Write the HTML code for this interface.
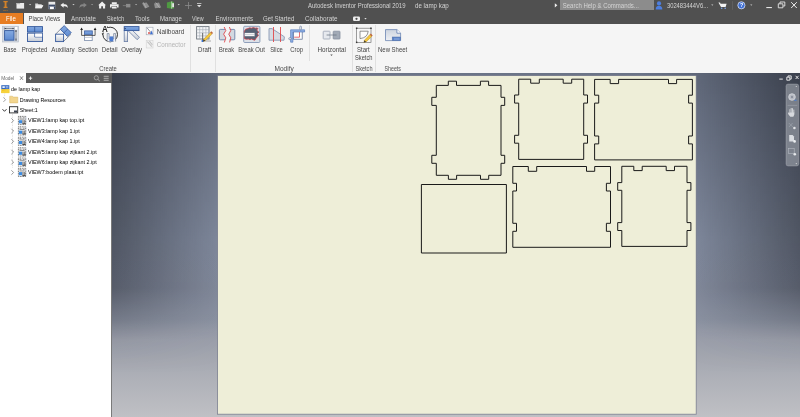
<!DOCTYPE html>
<html><head><meta charset="utf-8"><title>Autodesk Inventor Professional 2019 - de lamp kap</title>
<style>
html,body{margin:0;padding:0;}
body{width:800px;height:417px;overflow:hidden;position:relative;background:#f5f5f5;font-family:"Liberation Sans", sans-serif;}
.abs{position:absolute;}
.t{position:absolute;white-space:pre;line-height:1;}
#title{left:0;top:0;width:800px;height:24px;background:#505050;}
#filetab{left:0;top:13px;width:22.5px;height:11px;background:#e77d22;}
#pvtab{left:24px;top:13px;width:41px;height:11px;background:#f5f5f5;}
#ribbon{left:0;top:24px;width:800px;height:49px;background:#f5f5f5;}
.sep{position:absolute;width:1px;background:#e0e0e0;}
#browser{left:0;top:73px;width:112px;height:344px;background:#fff;}
#canvas{left:112px;top:73px;width:688px;height:344px;overflow:hidden;
 background:linear-gradient(180deg,#6b7487 0px,#8c96ab 167px,#8d95a8 215px,#9198a8 247px,#989dab 257px,#9da1ad 267px,#a6a9b2 287px,#bbbcc1 334px,#c0c1c5 344px);}
#vig{left:0;top:0;width:100%;height:100%;
 background:linear-gradient(90deg,rgba(10,12,18,.5) 0px,rgba(10,12,18,.12) 106px,rgba(10,12,18,0) 160px,rgba(10,12,18,0) 530px,rgba(10,12,18,.12) 584px,rgba(10,12,18,.5) 688px);
 -webkit-mask-image:linear-gradient(180deg,#000 0px,rgba(0,0,0,.92) 167px,rgba(0,0,0,.82) 215px,rgba(0,0,0,.42) 247px,rgba(0,0,0,.13) 267px,transparent 300px);mask-image:linear-gradient(180deg,#000 0px,rgba(0,0,0,.92) 167px,rgba(0,0,0,.82) 215px,rgba(0,0,0,.42) 247px,rgba(0,0,0,.13) 267px,transparent 300px);}
#sheet{left:217.5px;top:76px;width:478px;height:337.5px;background:#eeeed8;box-shadow:0 0 1.6px 0.4px rgba(40,48,86,.95), 1px 1px 2px rgba(30,34,60,.5);}
</style></head><body>
<div id="title" class="abs"></div>
<div class="abs" style="left:560px;top:0;width:93.5px;height:10px;background:#8c8c8c;"></div>
<div id="filetab" class="abs"></div>
<div id="pvtab" class="abs"></div>
<div id="ribbon" class="abs">
  <div class="sep" style="left:190px;top:1px;height:47px;"></div>
  <div class="sep" style="left:215px;top:1px;height:47px;"></div>
  <div class="sep" style="left:309px;top:1px;height:36px;"></div>
  <div class="sep" style="left:352px;top:1px;height:47px;"></div>
  <div class="sep" style="left:375px;top:1px;height:47px;"></div>
</div>
<div id="canvas" class="abs"><div id="vig" class="abs"></div></div>
<div id="browser" class="abs">
  <div class="abs" style="left:111px;top:0;width:1px;height:344px;background:#7a7a7a;"></div>
  <div class="abs" style="left:26px;top:0;width:86px;height:10px;background:#5a5a5a;"></div>
</div>
<svg class="abs" style="left:0;top:0;" width="800" height="417" viewBox="0 0 800 417" fill="none" stroke="#1a1a1a" stroke-width="1">
<rect x="217.5" y="75.6" width="478.7" height="338.6" fill="#eeeed8" stroke="#676a82" stroke-opacity=".8" stroke-width=".8"/>
<path d="M436.3 85.4H448.3V81.2H456.5V85.4H480.4V81.2H488.6V85.4H501V97.3H504.7V105.4H501V155.3H504.7V163.3H501V175.3H488.7V179.3H480.5V175.3H456.6V179.3H448.4V175.3H436.3V163.3H431.8V155.3H436.3V105.4H431.8V97.3H436.3Z"/>
<path d="M518.7 79.2H530.7V83.2H539.3V79.2H563.2V83.2H571.7V79.2H583.7V95H587.5V103.1H583.7V135.3H587.5V143.2H583.7V159.4H518.7V143.2H514.6V135.3H518.7V103.1H514.6V95H518.7Z"/>
<path d="M594.6 79.4H610.2V83.6H618.6V79.4H668.5V83.6H676.6V79.4H692.4V95.2H688.6V103.1H692.4V136H688.6V143.9H692.4V159.9H594.6V143.9H598.7V136H594.6V103.1H598.7V95.2H594.6Z"/>
<path d="M421.4 184.5H506.4V253H421.4Z"/>
<path d="M512.8 166.5H528.3V171.3H536.7V166.5H586.5V171.3H594.7V166.5H610.5V183.3H606.4V191H610.5V223.3H606.4V231.3H610.5V247.3H512.8V231.3H516.5V223.3H512.8V191H516.5V183.3H512.8Z"/>
<path d="M621.8 166.3H633.8V170.6H642.2V166.3H666.2V170.6H674.5V166.3H687V182.6H690.9V190.3H687V222.6H690.9V230.5H687V246.4H621.8V230.5H617.7V222.6H621.8V190.3H617.7V182.6H621.8Z"/>
</svg>

<svg class="abs" style="left:0;top:0;will-change:transform;" width="800" height="417" viewBox="0 0 800 417" font-family="Liberation Sans, sans-serif">
<defs>
<linearGradient id="gb" x1="0" y1="0" x2="0" y2="1"><stop offset="0" stop-color="#86abe2"/><stop offset="1" stop-color="#5d8ad0"/></linearGradient>
<linearGradient id="gg" x1="0" y1="0" x2="0" y2="1"><stop offset="0" stop-color="#ffffff"/><stop offset="1" stop-color="#c4cad4"/></linearGradient>
<linearGradient id="gs" x1="0" y1="0" x2="0" y2="1"><stop offset="0" stop-color="#cdd4df"/><stop offset="1" stop-color="#eef0f4"/></linearGradient>
</defs>
<!-- ===== quick access toolbar ===== -->
<g id="qat">
<path d="M3.4 0.9h4.3v1.3h-1.2v4.6h1v1.3h-3.9v-1.3h1v-4.6h-1.2z" fill="#d28128"/>
<text x="3.1" y="10.6" font-size="2.4" font-weight="bold" fill="#c9791f" textLength="4.8" lengthAdjust="spacingAndGlyphs">PRO</text>
<rect x="16.5" y="3" width="7.6" height="5.6" fill="#ebebeb"/><rect x="16.5" y="3" width="3.6" height="1.2" fill="#b5b5b5"/>
<path d="M29 4h2.2l-1.1 1.3z" fill="#cfcfcf"/>
<path d="M35.2 3.4h2.6l.7.8h3.2v1h1.6l-1.6 3h-6.5z" fill="#d8d8d8"/><path d="M36.4 5.3h6.9l-1.7 2.9h-6.4z" fill="#f2f2f2"/>
<rect x="48.5" y="1.8" width="6.7" height="7.3" fill="#e9e9e9"/><rect x="48.5" y="4.6" width="6.7" height="2" fill="#3f4d69"/><rect x="50" y="6.9" width="3.6" height="2.2" fill="#fdfdfd"/><rect x="48.5" y="6.6" width="1.3" height="2.5" fill="#3f4d69"/><rect x="53.9" y="6.6" width="1.3" height="2.5" fill="#3f4d69"/>
<path d="M60.4 5.1l3.2-2.4v1.5h1.3q2.9 0 2.9 3.9q-.9-1.9-2.9-1.9h-1.3v1.5z" fill="#f0f0f0"/>
<path d="M72.4 4h2.2l-1.1 1.3z" fill="#cfcfcf"/>
<path d="M86.8 5.1l-3.2-2.4v1.5h-1.3q-2.9 0-2.9 3.9q.9-1.9 2.9-1.9h1.3v1.5z" fill="#858585"/>
<path d="M91 4h2.2l-1.1 1.3z" fill="#9a9a9a"/>
<path d="M98.2 5.2l3.9-3.6l3.9 3.6h-.9v3.4h-2.1v-2.3h-1.8v2.3h-2.1v-3.4z" fill="#f0f0f0"/>
<path d="M111.8 2.2h5v1.8h-5z M110 4.2h8.6v3.2h-1.6v-1.3h-5.4v1.3h-1.6z M112 6.6h4.6v2h-4.6z" fill="#efefef"/>
<rect x="126" y="3.9" width="4.4" height="3.5" fill="#8b8b8b"/><rect x="122.8" y="5.1" width="3.5" height="1" fill="#777"/>
<path d="M135 4h2.2l-1.1 1.3z" fill="#b0b0b0"/>
<path d="M142 3.2l4.6-.8l2.8 4.3l-4.3 1.7z" fill="#8e8e8e"/><path d="M143.2 2.2l3 5.8" stroke="#b5b5b5" stroke-width=".7"/>
<path d="M154 3.4l5-.8l2.2 5l-6.2.6z" fill="#909090"/><path d="M155.6 2.4l4 5.4" stroke="#bdbdbd" stroke-width=".7"/>
<path d="M166.9 2.6l4.8-1.3l2.3.9v6.2l-2.3.4l-4.8-.9z" fill="#4f9a42"/><path d="M171.7 1.4v7.3" stroke="#d9ead4" stroke-width=".7"/><rect x="172.2" y="3.2" width="1.8" height="4" fill="#e6e6e6"/>
<path d="M177.6 4h2.2l-1.1 1.3z" fill="#cfcfcf"/>
<path d="M185 5.5h7M188.5 2v7" stroke="#8a8a8a" stroke-width=".8"/>
<path d="M197 3.2h4.4v.9h-4.4z M197 5h4.4l-2.2 2.2z" fill="#e0e0e0"/>
<!-- collaborate extra icon -->
<rect x="353" y="16.5" width="7" height="4.5" rx="1.2" fill="#ededed"/><circle cx="356.5" cy="18.8" r="1.1" fill="#4a4a4a"/>
<path d="M364.3 18h2.4l-1.2 1.5z" fill="#e0e0e0"/>
<!-- right side -->
<path d="M554.8 3.2l2.6 2.1l-2.6 2.1z" fill="#f0f0f0"/>
<circle cx="659" cy="3.4" r="2.1" fill="#4d7fe0"/><path d="M655.7 9.4q0-3.6 3.3-3.6t3.3 3.6z" fill="#4d7fe0"/>
<path d="M711.2 4.4h2.2l-1.1 1.4z" fill="#cfcfcf"/>
<path d="M718.4 2.6h1.6l.6 1.2h6l-1 3.3h-4.6z" fill="#f2f2f2"/><circle cx="721.7" cy="8.3" r=".8" fill="#7aa2e8"/><circle cx="725.2" cy="8.3" r=".8" fill="#7aa2e8"/>
<rect x="732.3" y="1.2" width=".7" height="8.6" fill="#666"/>
<circle cx="741.4" cy="5.3" r="3.6" fill="#3f6fd3" stroke="#e8eefc" stroke-width=".7"/>
<text x="739.9" y="7.3" font-size="5.4" font-weight="bold" fill="#fff">?</text>
<path d="M750.2 4.4h2.2l-1.1 1.4z" fill="#cfcfcf"/>
<rect x="766.3" y="7" width="5.6" height="1.1" fill="#e6e6e6"/>
<path d="M778.3 3.8h4.6v4h-4.6z M780 3.6v-1.6h4.8v4h-1.7" fill="none" stroke="#e6e6e6" stroke-width=".9"/>
<path d="M791.2 2.2l5.6 5.8M796.8 2.2l-5.6 5.8" stroke="#ededed" stroke-width="1"/>
</g>
<!-- ===== ribbon icons ===== -->
<g id="rib">
<!-- Base -->
<rect x="2.6" y="26.2" width="15.8" height="15.8" fill="#d5dae2" stroke="#aeb6c4" stroke-width=".6"/>
<rect x="4.6" y="30.6" width="9.4" height="9.6" fill="url(#gb)" stroke="#35599c" stroke-width=".9"/>
<path d="M4.6 28.5h9.4M16 30.6v9.600" stroke="#4a4f5a" stroke-width=".55"/><path d="M4.400 27.400v2.200M14.200 27.400v2.200M15 30.500h2M15 40.300h2" stroke="#4a4f5a" stroke-width=".5"/><path d="M4.800 28.500l1.300-.700v1.400zM13.800 28.500l-1.300-.700v1.400zM16 30.800l-.700 1.300h1.400zM16 40l-.700-1.300h1.400z" fill="#30343c"/>
<rect x="14.8" y="27" width="2.4" height="2.6" fill="#fff"/>
<!-- Projected -->
<rect x="27.5" y="26.6" width="15" height="5.5" fill="url(#gb)" stroke="#35599c" stroke-width=".9"/><path d="M34.7 26.6v5.5" stroke="#35599c" stroke-width=".9"/>
<rect x="27.5" y="33.2" width="15" height="8.3" fill="url(#gg)" stroke="#35599c" stroke-width=".9"/><path d="M34.7 33.2v3.8h7.8" fill="none" stroke="#35599c" stroke-width=".8"/>
<rect x="35.2" y="33.7" width="6.9" height="3" fill="#fbfbfb"/>
<!-- Auxiliary -->
<path d="M55.6 34.2l7-7M63.6 41.4l7.4-7.2M63.6 34.2l4-4" stroke="#3d4a60" stroke-width=".6"/>
<rect x="55.6" y="34.2" width="8" height="7.4" fill="url(#gg)" stroke="#35599c" stroke-width=".9"/>
<path d="M64.2 25.6l7 7l-3.8 3.8l-7-7z" fill="url(#gb)" stroke="#35599c" stroke-width=".8"/><path d="M67.7 29.1l-3.8 3.8" stroke="#35599c" stroke-width=".7"/>
<!-- Section -->
<rect x="84.6" y="31" width="7.6" height="9.6" fill="#fff" stroke="#7b8cab" stroke-width=".8"/><rect x="84.6" y="31" width="7.6" height="3.4" fill="url(#gb)" stroke="#4468ac" stroke-width=".8"/><path d="M84.6 37.4h7.6" stroke="#aab4c6" stroke-width=".7"/>
<path d="M81.6 29v6.400h13.500v-6.400" fill="none" stroke="#1e1e1e" stroke-width=".7"/><path d="M80.200 30l1.400-2.600l1.400 2.600zM93.700 30l1.400-2.600l1.400 2.600z" fill="#1e1e1e"/>
<!-- Detail -->
<circle cx="110.2" cy="34.5" r="7.3" fill="none" stroke="#1e1e1e" stroke-width=".9"/>
<rect x="101.400" y="25.600" width="6.800" height="7" fill="#f5f5f5"/>
<path d="M108.6 27.2l-1.6-.9v1.8zM102.9 34.9l-1.3-1.1l1.7-.6z" fill="#1e1e1e"/>
<path d="M107.200 41.600v-8h1.900v5.400h4.600v-5.400h1.900v8" fill="#eef1f6" stroke="#55657f" stroke-width=".6"/><rect x="109.500" y="36.400" width="3.800" height="5" fill="#4c7bd0"/>
<text x="102" y="32.400" font-size="8.200" font-weight="bold" fill="#222" textLength="5.800" lengthAdjust="spacingAndGlyphs">A</text>
<!-- Overlay -->
<rect x="124.2" y="30.6" width="3.4" height="11" fill="url(#gg)" stroke="#6a7ea6" stroke-width=".8"/>
<path d="M127.8 30.4l2.3-2.3l9.4 9.2l-2.4 2.4z" fill="url(#gg)" stroke="#6a7ea6" stroke-width=".8"/>
<rect x="124.2" y="26.6" width="14.8" height="4" fill="url(#gb)" stroke="#35599c" stroke-width=".9"/><path d="M124.6 27.6l1.4 1l-1.4 1z" fill="#1d2f57"/>
<!-- Nailboard / Connector -->
<rect x="146.2" y="27.2" width="6.8" height="7.6" fill="#fdfdfd" stroke="#9aa2b0" stroke-width=".6"/><path d="M147.2 28l4.6 5.6" stroke="#667" stroke-width=".7"/><path d="M151.8 30.6l1 3.6h-3z" fill="#3f70d0"/><circle cx="149" cy="33" r="1" fill="#d9534f"/>
<rect x="146.2" y="40.4" width="6.8" height="7.6" fill="#f3f3f3" stroke="#d2d2d2" stroke-width=".6"/><path d="M147.4 41.6l4.4 5M149.4 41.2l3 3.6" stroke="#c4c4c4" stroke-width="1.1"/>
<!-- Draft -->
<rect x="196.6" y="26.6" width="12.4" height="12.4" fill="#f4f5f7" stroke="#70777f" stroke-width=".9"/>
<path d="M199.7 26.6v12.4M202.8 26.6v12.4M205.9 26.6v12.4M196.6 29.7h12.4M196.6 32.8h12.4M196.6 35.9h12.4" stroke="#a3a9b3" stroke-width=".6"/>
<path d="M202.6 33v8" stroke="#555" stroke-width=".8"/><path d="M204 41h7" stroke="#999" stroke-width=".8"/><rect x="201.6" y="40" width="2" height="2" fill="#2f6fe0"/>
<path d="M203.6 39.2l6.6-6.8l1.8 1.7l-6.7 6.7l-2.3.7z" fill="#f4c63a" stroke="#a8842a" stroke-width=".4"/><path d="M210.2 32.4l1.1-1.1l1.8 1.7l-1.1 1.1z" fill="#c26a3a"/><path d="M203.6 39.2l1.7 1.6l-2.3.7z" fill="#3a3a3a"/>
<!-- Break -->
<rect x="219.4" y="29.4" width="15.4" height="10.4" rx=".8" fill="#d3d8e0" stroke="#6c83a8" stroke-width=".9"/>
<path d="M224.2 27.2l1.6 3.4l-2.2 3.6l2.2 3.6l-1.4 4.4l4.6 0l1.2-4.4l-2-3.6l2-3.6l-1.4-3.4z" fill="#f5f5f5"/>
<path d="M224.2 27l1.6 3.6l-2.2 3.6l2.2 3.6l-1.4 4.6M229.4 27l1.4 3.6l-2 3.6l2 3.600l-1.200 4.600" fill="none" stroke="#e0474c" stroke-width=".9"/>
<!-- Break Out -->
<rect x="243.700" y="26.300" width="16.200" height="16.200" rx="1" fill="#dde1e8" stroke="#8496b4" stroke-width=".9"/>
<path d="M244.300 31.200q1-2.800 3.600-2.600q1.600-1.400 3.600-.4q1.800-1.200 3.800 0q1.400-.800 2.800.400l-1.400 1.400l2.200 2.200l-1.600 1.400l1.200 2q-1.200 1-2.400 2.600l-1.200 2q-2.200-.400-3.400-1.200q-1.600 1.200-3.200 0q-2.200.800-4-.400z" fill="#566174" stroke="#d8363c" stroke-width=".7"/>
<rect x="244.300" y="32.800" width="10.600" height="3.600" fill="#fbfbfb" stroke="#566174" stroke-width=".5"/><path d="M244.300 34.600h10.600" stroke="#9aa3b2" stroke-width=".5"/>
<!-- Slice -->
<path d="M269 28.600h3l12.400 8.200l-.4 3.400h-15z" fill="#d6dbe3" stroke="#8a9ab5" stroke-width=".9" stroke-linejoin="round"/>
<path d="M273.500 27v15M280.500 27v15" stroke="#e0474c" stroke-width=".9"/>
<!-- Crop -->
<rect x="293.400" y="31.400" width="8.800" height="7.800" fill="#fdfdfd" stroke="#55698f" stroke-width=".7"/>
<path d="M299.500 31.800v5.400h-5.300" fill="none" stroke="#e0474c" stroke-width=".8"/>
<path d="M290.600 42.200v-12.400h14v2.200h-11.700v10.200z" fill="#8fb0e6" stroke="#4a70b4" stroke-width=".6" stroke-linejoin="round"/>
<rect x="299.800" y="26.200" width="1.600" height="3.600" rx=".6" fill="#fdfdfd" stroke="#55698f" stroke-width=".6"/><rect x="288.800" y="37.800" width="2.400" height="1.800" rx=".6" fill="#fdfdfd" stroke="#55698f" stroke-width=".6"/>
<!-- Horizontal -->
<path d="M326.500 35h10.500" stroke="#7b8492" stroke-width=".8"/>
<rect x="323.200" y="31.200" width="6.800" height="7.800" rx=".6" fill="#e6e9ee" stroke="#9aa3b2" stroke-width=".8"/><rect x="333.200" y="31.200" width="6.800" height="7.800" rx=".6" fill="#a2aab6" stroke="#868f9e" stroke-width=".8"/>
<path d="M326.600 35h3.400M333 35h3.600" stroke="#6c7684" stroke-width=".8"/>
<path d="M330.300 54.400h2.400l-1.200 1.500z" fill="#555"/>
<!-- Start Sketch -->
<rect x="356.600" y="28.200" width="14.400" height="14.200" fill="#f8f8f8" stroke="#6a6a6a" stroke-width=".65"/>
<rect x="355.900" y="27.500" width="1.500" height="1.500" fill="#3c3c3c"/><rect x="370.200" y="27.500" width="1.500" height="1.500" fill="#3c3c3c"/><rect x="355.900" y="41.600" width="1.500" height="1.500" fill="#3c3c3c"/>
<path d="M360 38.600v-7.400h8.200q-.6 6.600-8.200 7.400z" fill="#fdfdfd" stroke="#5c5c5c" stroke-width=".65"/>
<path d="M364.400 40.200l5.400-5.600l1.900 1.800l-5.500 5.500l-2.400.7z" fill="#f4c63a" stroke="#a8842a" stroke-width=".4"/><path d="M369.800 34.600l1-1l1.900 1.800l-1 1z" fill="#c26a3a"/><path d="M364.400 40.200l1.800 1.700l-2.400.7z" fill="#3a3a3a"/>
<!-- New Sheet -->
<path d="M385.500 29.600h11.400l3.700 3.600v7.400h-15.100z" fill="url(#gs)" stroke="#5a77aa" stroke-width=".7" stroke-linejoin="round"/>
<path d="M396.900 29.600v3.600h3.700" fill="#fff" stroke="#4f6fa8" stroke-width=".7"/>
<rect x="392.200" y="37" width="8.400" height="3.600" fill="#5b82c6" stroke="#4f6fa8" stroke-width=".5"/><path d="M394 39.600h5.600M394 38.400h5.600" stroke="#9db8e6" stroke-width=".5"/>
</g>
<!-- ===== browser ===== -->
<g id="brw">
<path d="M20 76.300l3 3.600M23 76.300l-3 3.600" stroke="#555" stroke-width=".7"/>
<path d="M28.800 78.200h3.400M30.500 76.500v3.400" stroke="#f2f2f2" stroke-width=".9"/>
<circle cx="96.300" cy="77.800" r="2.100" fill="none" stroke="#bcbcbc" stroke-width=".7"/><path d="M97.900 79.400l1.900 1.700" stroke="#bcbcbc" stroke-width=".8"/>
<path d="M103.700 76.300h5M103.700 78.300h5M103.700 80.300h5" stroke="#c2c2c2" stroke-width=".8"/>
<!-- doc icon -->
<rect x="1.300" y="85.200" width="8" height="4.200" fill="#3569be"/><rect x="1.300" y="89.200" width="8" height="3.900" fill="#f2c21c"/><path d="M1.300 91.200l8-2.200v4.100h-8z" fill="#f6d23c"/>
<rect x="2.400" y="86.200" width="2.400" height="1.800" fill="#e8f0ff"/><path d="M5.600 86.600h2.800M5.600 87.800h2.800" stroke="#dfe9ff" stroke-width=".6"/>
<!-- tree lines -->
<path d="M4.600 93.600v4M12.500 114v54" stroke="#c8c8c8" stroke-width=".6" stroke-dasharray=".8 .8"/>
<path d="M3.400 97.500l2.200 2.200l-2.200 2.200" fill="none" stroke="#8a8a8a" stroke-width=".8"/>
<path d="M9.700 96.200h2.800l.8.900h4.500v5.800h-8.100z" fill="#f3d68e" stroke="#d6b468" stroke-width=".5"/>
<path d="M2.500 109.200l2 2.100l2-2.100" fill="none" stroke="#222" stroke-width=".9"/>
<rect x="9.500" y="106.700" width="8.200" height="6.200" fill="#fcfcfc" stroke="#2c2c2c" stroke-width=".9"/><rect x="14" y="110.500" width="3.200" height="1.900" fill="#3c4350"/>
<path d="M11.400 118.40l2.200 2.200l-2.200 2.200" fill="none" stroke="#808080" stroke-width=".8"/>
<rect x="18.400" y="116.40" width="7.300" height="8.200" fill="#fff" stroke="#3a3a3a" stroke-width=".75" stroke-dasharray="1 .7"/>
<path d="M19.500 117.80h2M22.700 117.80h2M19.500 119.10h5.200" stroke="#5a5a5a" stroke-width=".7"/>
<rect x="18.900" y="120.20" width="3.200" height="3.200" fill="#3b8be0"/>
<path d="M23 120.10v3.600M24.800 120.10v3.600M22.400 123.70h3.200" stroke="#222" stroke-width=".75"/>
<path d="M26.100 116.70v7" stroke="#b9cdea" stroke-width=".6" stroke-dasharray=".8 .6"/>
<path d="M11.400 128.80l2.200 2.200l-2.200 2.200" fill="none" stroke="#808080" stroke-width=".8"/>
<rect x="18.400" y="126.80" width="7.300" height="8.200" fill="#fff" stroke="#3a3a3a" stroke-width=".75" stroke-dasharray="1 .7"/>
<path d="M19.500 128.20h2M22.700 128.20h2M19.500 129.50h5.200" stroke="#5a5a5a" stroke-width=".7"/>
<rect x="18.900" y="130.60" width="3.200" height="3.200" fill="#3b8be0"/>
<path d="M23 130.50v3.600M24.800 130.50v3.600M22.400 134.10h3.200" stroke="#222" stroke-width=".75"/>
<path d="M26.100 127.10v7" stroke="#b9cdea" stroke-width=".6" stroke-dasharray=".8 .6"/>
<path d="M11.400 139.20l2.200 2.200l-2.200 2.200" fill="none" stroke="#808080" stroke-width=".8"/>
<rect x="18.400" y="137.20" width="7.300" height="8.200" fill="#fff" stroke="#3a3a3a" stroke-width=".75" stroke-dasharray="1 .7"/>
<path d="M19.500 138.60h2M22.700 138.60h2M19.500 139.90h5.200" stroke="#5a5a5a" stroke-width=".7"/>
<rect x="18.900" y="141.00" width="3.200" height="3.200" fill="#3b8be0"/>
<path d="M23 140.90v3.600M24.800 140.90v3.600M22.400 144.50h3.200" stroke="#222" stroke-width=".75"/>
<path d="M26.100 137.50v7" stroke="#b9cdea" stroke-width=".6" stroke-dasharray=".8 .6"/>
<path d="M11.400 149.80l2.200 2.200l-2.200 2.200" fill="none" stroke="#808080" stroke-width=".8"/>
<rect x="18.400" y="147.80" width="7.300" height="8.200" fill="#fff" stroke="#3a3a3a" stroke-width=".75" stroke-dasharray="1 .7"/>
<path d="M19.500 149.20h2M22.700 149.20h2M19.500 150.50h5.200" stroke="#5a5a5a" stroke-width=".7"/>
<rect x="18.900" y="151.60" width="3.200" height="3.200" fill="#3b8be0"/>
<path d="M23 151.50v3.600M24.800 151.50v3.600M22.400 155.10h3.200" stroke="#222" stroke-width=".75"/>
<path d="M26.100 148.10v7" stroke="#b9cdea" stroke-width=".6" stroke-dasharray=".8 .6"/>
<path d="M11.400 160.00l2.200 2.200l-2.200 2.200" fill="none" stroke="#808080" stroke-width=".8"/>
<rect x="18.400" y="158.00" width="7.300" height="8.200" fill="#fff" stroke="#3a3a3a" stroke-width=".75" stroke-dasharray="1 .7"/>
<path d="M19.500 159.40h2M22.700 159.40h2M19.500 160.70h5.200" stroke="#5a5a5a" stroke-width=".7"/>
<rect x="18.900" y="161.80" width="3.200" height="3.200" fill="#3b8be0"/>
<path d="M23 161.70v3.600M24.800 161.70v3.600M22.400 165.30h3.200" stroke="#222" stroke-width=".75"/>
<path d="M26.100 158.30v7" stroke="#b9cdea" stroke-width=".6" stroke-dasharray=".8 .6"/>
<path d="M11.400 170.30l2.200 2.200l-2.200 2.200" fill="none" stroke="#808080" stroke-width=".8"/>
<rect x="18.400" y="168.30" width="7.300" height="8.200" fill="#fff" stroke="#3a3a3a" stroke-width=".75" stroke-dasharray="1 .7"/>
<path d="M19.500 169.70h2M22.700 169.70h2M19.500 171.00h5.200" stroke="#5a5a5a" stroke-width=".7"/>
<rect x="18.900" y="172.10" width="3.200" height="3.200" fill="#3b8be0"/>
<path d="M23 172.00v3.600M24.800 172.00v3.600M22.400 175.60h3.200" stroke="#222" stroke-width=".75"/>
<path d="M26.100 168.60v7" stroke="#b9cdea" stroke-width=".6" stroke-dasharray=".8 .6"/>
</g>
<g id="nav">
<path d="M779.300 79.100h3.500" stroke="#e8e8e8" stroke-width="1"/>
<path d="M786.800 77.200h3v3h-3zM788 77v-1.100h3.200v3.200h-1.200" fill="none" stroke="#f0f0f0" stroke-width=".9"/>
<path d="M795.600 75.800l3 3.200M798.600 75.800l-3 3.200" stroke="#f0f0f0" stroke-width=".9"/>
<rect x="786" y="84" width="12.800" height="82" rx="2.200" fill="rgba(161,166,175,.6)" stroke="rgba(200,204,212,.5)" stroke-width=".6"/>
<circle cx="796.300" cy="86.500" r=".6" fill="#ddd"/><circle cx="796.300" cy="163.600" r=".6" fill="#ddd"/>
<circle cx="792" cy="97" r="3.300" fill="#b9bcc4" stroke="#d6d8de" stroke-width=".8"/><circle cx="792" cy="97" r="1.200" fill="#8c919d"/><path d="M794.200 100.300h2.400" stroke="#4a7fd6" stroke-width=".9"/>
<path d="M787.600 105.400h9.600" stroke="#a6aab4" stroke-width=".5"/>
<path d="M789.900 113v-3.400M791.200 112.600v-4.200M792.500 112.600v-4M793.800 113v-3" stroke="#d8dade" stroke-width=".9" stroke-linecap="round"/><path d="M789.500 112.400h4.800v2.400l-1 2h-3l-1.800-2.400l-.6-1.600l.8-.2l.8 1z" fill="#d8dade"/>
<path d="M788.800 123l4 4M792.600 123l-3.600 4" stroke="#9ea3ad" stroke-width=".7"/><circle cx="794.400" cy="128" r="1.300" fill="#dfe1e5"/>
<path d="M789.200 135h3.400l1.400 1.400v5.200h-4.800z" fill="#d9dce1"/><circle cx="794.600" cy="141.400" r="1.300" fill="#eceef1"/>
<rect x="788.600" y="148.600" width="5.600" height="5" fill="none" stroke="#b4b8c0" stroke-width=".6"/><circle cx="794.800" cy="154.200" r="1.300" fill="#e6e8eb"/>
</g>
</svg>

<svg class="abs" style="left:0;top:0;will-change:transform;" width="800" height="417" viewBox="0 0 800 417" font-family="Liberation Sans, sans-serif">
<text x="308.00" y="7.73" font-size="6.50" fill="#d4d4d4" textLength="97.50" lengthAdjust="spacingAndGlyphs">Autodesk Inventor Professional 2019</text>
<text x="415.00" y="7.73" font-size="6.50" fill="#d4d4d4" textLength="33.80" lengthAdjust="spacingAndGlyphs">de lamp kap</text>
<text x="562.70" y="7.63" font-size="6.50" fill="#d4d4d4" textLength="76.20" lengthAdjust="spacingAndGlyphs">Search Help &amp; Commands...</text>
<text x="666.90" y="7.63" font-size="6.50" fill="#d4d4d4" textLength="41.20" lengthAdjust="spacingAndGlyphs">302483444V6...</text>
<text x="6.00" y="20.90" font-size="6.70" fill="#ffffff" textLength="9.90" lengthAdjust="spacingAndGlyphs">File</text>
<text x="28.50" y="20.90" font-size="6.70" fill="#444" textLength="31.80" lengthAdjust="spacingAndGlyphs">Place Views</text>
<text x="71.00" y="20.90" font-size="6.70" fill="#d4d4d4" textLength="25.00" lengthAdjust="spacingAndGlyphs">Annotate</text>
<text x="106.80" y="20.90" font-size="6.70" fill="#d4d4d4" textLength="17.50" lengthAdjust="spacingAndGlyphs">Sketch</text>
<text x="135.00" y="20.90" font-size="6.70" fill="#d4d4d4" textLength="14.50" lengthAdjust="spacingAndGlyphs">Tools</text>
<text x="160.00" y="20.90" font-size="6.70" fill="#d4d4d4" textLength="21.80" lengthAdjust="spacingAndGlyphs">Manage</text>
<text x="192.00" y="20.90" font-size="6.70" fill="#d4d4d4" textLength="11.50" lengthAdjust="spacingAndGlyphs">View</text>
<text x="215.50" y="20.90" font-size="6.70" fill="#d4d4d4" textLength="37.50" lengthAdjust="spacingAndGlyphs">Environments</text>
<text x="263.00" y="20.90" font-size="6.70" fill="#d4d4d4" textLength="31.30" lengthAdjust="spacingAndGlyphs">Get Started</text>
<text x="305.00" y="20.90" font-size="6.70" fill="#d4d4d4" textLength="32.50" lengthAdjust="spacingAndGlyphs">Collaborate</text>
<text x="3.50" y="51.63" font-size="6.50" fill="#454545" textLength="13.00" lengthAdjust="spacingAndGlyphs">Base</text>
<text x="21.80" y="51.63" font-size="6.50" fill="#454545" textLength="25.70" lengthAdjust="spacingAndGlyphs">Projected</text>
<text x="51.30" y="51.63" font-size="6.50" fill="#454545" textLength="23.20" lengthAdjust="spacingAndGlyphs">Auxiliary</text>
<text x="78.00" y="51.63" font-size="6.50" fill="#454545" textLength="19.80" lengthAdjust="spacingAndGlyphs">Section</text>
<text x="101.80" y="51.63" font-size="6.50" fill="#454545" textLength="15.70" lengthAdjust="spacingAndGlyphs">Detail</text>
<text x="121.30" y="51.63" font-size="6.50" fill="#454545" textLength="20.70" lengthAdjust="spacingAndGlyphs">Overlay</text>
<text x="156.80" y="33.63" font-size="6.50" fill="#454545" textLength="27.50" lengthAdjust="spacingAndGlyphs">Nailboard</text>
<text x="156.80" y="46.83" font-size="6.50" fill="#b4b4b4" textLength="28.70" lengthAdjust="spacingAndGlyphs">Connector</text>
<text x="99.30" y="71.23" font-size="6.50" fill="#4a4a4a" textLength="17.50" lengthAdjust="spacingAndGlyphs">Create</text>
<text x="198.00" y="51.63" font-size="6.50" fill="#454545" textLength="13.20" lengthAdjust="spacingAndGlyphs">Draft</text>
<text x="219.00" y="51.63" font-size="6.50" fill="#454545" textLength="15.00" lengthAdjust="spacingAndGlyphs">Break</text>
<text x="238.20" y="51.63" font-size="6.50" fill="#454545" textLength="26.60" lengthAdjust="spacingAndGlyphs">Break Out</text>
<text x="270.20" y="51.63" font-size="6.50" fill="#454545" textLength="12.60" lengthAdjust="spacingAndGlyphs">Slice</text>
<text x="290.20" y="51.63" font-size="6.50" fill="#454545" textLength="12.80" lengthAdjust="spacingAndGlyphs">Crop</text>
<text x="274.50" y="71.23" font-size="6.50" fill="#4a4a4a" textLength="19.30" lengthAdjust="spacingAndGlyphs">Modify</text>
<text x="317.50" y="51.63" font-size="6.50" fill="#454545" textLength="28.30" lengthAdjust="spacingAndGlyphs">Horizontal</text>
<text x="357.00" y="51.63" font-size="6.50" fill="#454545" textLength="12.80" lengthAdjust="spacingAndGlyphs">Start</text>
<text x="355.00" y="59.83" font-size="6.50" fill="#454545" textLength="17.50" lengthAdjust="spacingAndGlyphs">Sketch</text>
<text x="355.50" y="71.23" font-size="6.50" fill="#4a4a4a" textLength="17.00" lengthAdjust="spacingAndGlyphs">Sketch</text>
<text x="378.00" y="51.63" font-size="6.50" fill="#454545" textLength="29.20" lengthAdjust="spacingAndGlyphs">New Sheet</text>
<text x="384.50" y="71.23" font-size="6.50" fill="#4a4a4a" textLength="16.50" lengthAdjust="spacingAndGlyphs">Sheets</text>
<text x="1.20" y="80.45" font-size="6.00" fill="#666" textLength="13.00" lengthAdjust="spacingAndGlyphs">Model</text>
<text x="11.10" y="91.15" font-size="6.00" fill="#000" textLength="29.10" lengthAdjust="spacingAndGlyphs">de lamp kap</text>
<text x="19.70" y="101.55" font-size="6.00" fill="#000" textLength="45.90" lengthAdjust="spacingAndGlyphs">Drawing Resources</text>
<text x="19.70" y="111.85" font-size="6.00" fill="#000" textLength="18.10" lengthAdjust="spacingAndGlyphs">Sheet:1</text>
<text x="27.90" y="122.45" font-size="6.00" fill="#000" textLength="56.40" lengthAdjust="spacingAndGlyphs">VIEW1:lamp kap top.ipt</text>
<text x="27.90" y="132.85" font-size="6.00" fill="#000" textLength="51.80" lengthAdjust="spacingAndGlyphs">VIEW3:lamp kap 1.ipt</text>
<text x="27.90" y="143.25" font-size="6.00" fill="#000" textLength="51.80" lengthAdjust="spacingAndGlyphs">VIEW4:lamp kap 1.ipt</text>
<text x="27.90" y="153.85" font-size="6.00" fill="#000" textLength="68.80" lengthAdjust="spacingAndGlyphs">VIEW5:lamp kap zijkant 2.ipt</text>
<text x="27.90" y="164.05" font-size="6.00" fill="#000" textLength="68.80" lengthAdjust="spacingAndGlyphs">VIEW6:lamp kap zijkant 2.ipt</text>
<text x="27.90" y="174.35" font-size="6.00" fill="#000" textLength="55.30" lengthAdjust="spacingAndGlyphs">VIEW7:bodem plaat.ipt</text>
</svg>
</body></html>
